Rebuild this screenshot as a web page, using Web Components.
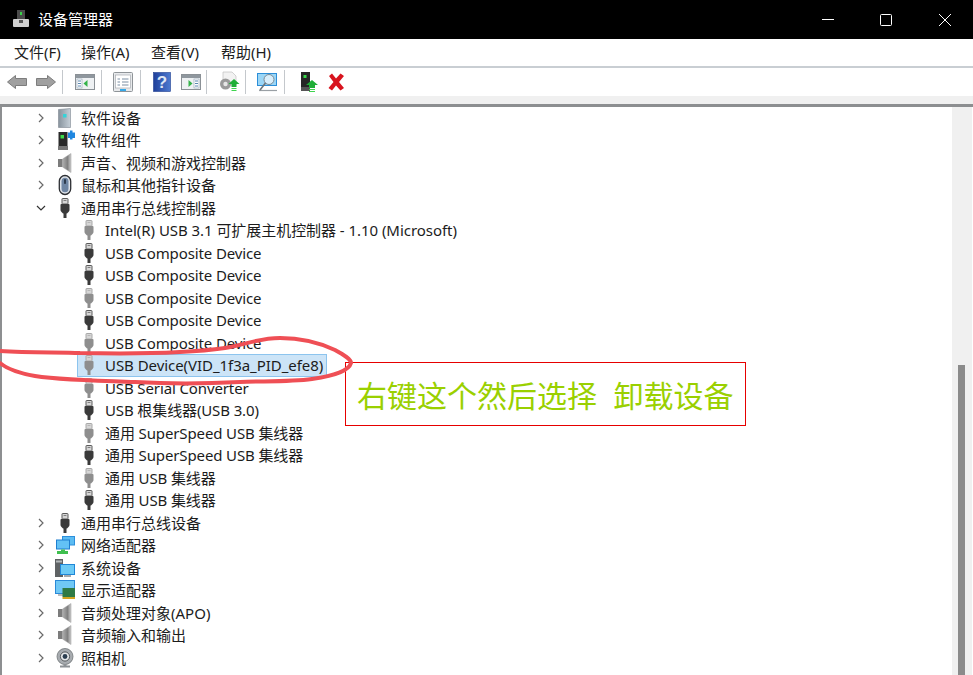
<!DOCTYPE html>
<html lang="zh">
<head>
<meta charset="utf-8">
<title>设备管理器</title>
<style>
    html, body{
        margin: 0;
        padding: 0;
        background: #fff;
        overflow: hidden;
    }
    body{
        font-family: "Noto Sans", "Noto Sans CJK SC", sans-serif;
        font-size: 15px;
        color: #1c1c1c;
    }
</style>
</head>
<body>

<dm-window>
    <dm-titlebar slot="title">设备管理器</dm-titlebar>
    <dm-menubar>
        <dm-menu style="--w:67px">文件(F)</dm-menu>
        <dm-menu style="--w:70px">操作(A)</dm-menu>
        <dm-menu style="--w:70px">查看(V)</dm-menu>
        <dm-menu style="--w:70px">帮助(H)</dm-menu>
    </dm-menubar>
    <dm-toolbar>
        <dm-tool name="back" style="--ml:2px;--w:29px"></dm-tool>
        <dm-tool name="forward" style="--ml:0px;--w:29px"></dm-tool>
        <dm-sep style="--ml:2px"></dm-sep>
        <dm-tool name="panel-left" style="--ml:7px;--w:30px"></dm-tool>
        <dm-sep style="--ml:1px"></dm-sep>
        <dm-tool name="props" style="--ml:6px;--w:30px"></dm-tool>
        <dm-sep style="--ml:2px"></dm-sep>
        <dm-tool name="help" style="--ml:6px;--w:29px"></dm-tool>
        <dm-tool name="panel-right" style="--ml:0px;--w:30px"></dm-tool>
        <dm-sep style="--ml:0px"></dm-sep>
        <dm-tool name="update" style="--ml:7px;--w:30px"></dm-tool>
        <dm-sep style="--ml:1px"></dm-sep>
        <dm-tool name="scan" style="--ml:6px;--w:30px"></dm-tool>
        <dm-sep style="--ml:2px"></dm-sep>
        <dm-tool name="enable" style="--ml:9px;--w:30px"></dm-tool>
        <dm-tool name="remove" style="--ml:-3px;--w:30px"></dm-tool>
    </dm-toolbar>
    <dm-tree>
        <dm-row state="closed" icon="tower">软件设备</dm-row>
        <dm-row state="closed" icon="component">软件组件</dm-row>
        <dm-row state="closed" icon="speaker">声音、视频和游戏控制器</dm-row>
        <dm-row state="closed" icon="mouse">鼠标和其他指针设备</dm-row>
        <dm-row state="open" icon="usb">通用串行总线控制器</dm-row>
        <dm-row child icon="usb-gray" style="--ls:-.05px">Intel(R) USB 3.1 可扩展主机控制器 - 1.10 (Microsoft)</dm-row>
        <dm-row child icon="usb">USB Composite Device</dm-row>
        <dm-row child icon="usb">USB Composite Device</dm-row>
        <dm-row child icon="usb-gray">USB Composite Device</dm-row>
        <dm-row child icon="usb">USB Composite Device</dm-row>
        <dm-row child icon="usb-gray">USB Composite Device</dm-row>
        <dm-row child selected icon="usb-gray" style="--ls:-.05px">USB Device(VID_1f3a_PID_efe8)</dm-row>
        <dm-row child icon="usb-gray">USB Serial Converter</dm-row>
        <dm-row child icon="usb">USB 根集线器(USB 3.0)</dm-row>
        <dm-row child icon="usb-gray">通用 SuperSpeed USB 集线器</dm-row>
        <dm-row child icon="usb">通用 SuperSpeed USB 集线器</dm-row>
        <dm-row child icon="usb-gray">通用 USB 集线器</dm-row>
        <dm-row child icon="usb">通用 USB 集线器</dm-row>
        <dm-row state="closed" icon="usb">通用串行总线设备</dm-row>
        <dm-row state="closed" icon="network">网络适配器</dm-row>
        <dm-row state="closed" icon="system">系统设备</dm-row>
        <dm-row state="closed" icon="display">显示适配器</dm-row>
        <dm-row state="closed" icon="speaker">音频处理对象(APO)</dm-row>
        <dm-row state="closed" icon="speaker">音频输入和输出</dm-row>
        <dm-row state="closed" icon="camera">照相机</dm-row>
    </dm-tree>
    <dm-note>右键这个然后选择  卸载设备</dm-note>
    <dm-scribble></dm-scribble>
</dm-window>

<script>
const ICONS = {
    usb: plug('#3a3a3a', '#5a5a5a'),
    'usb-gray': plug('#8e8e8e', '#a8a8a8'),
    tower: `
        <defs><linearGradient id="t" x1="0" x2="1"><stop offset="0" stop-color="#87939d"/><stop offset="1" stop-color="#c6d0d8"/></linearGradient></defs>
        <path d="M3.500 1.500 L15.500 .5 V19.500 H3.500 Z" fill="url(#t)" stroke="#7d8790" stroke-width=".6"/>
        <rect x="8" y="6" width="3.500" height="3.500" fill="#35d3d8"/>`,
    component: `
        <path d="M3.500 2 H12.500 V16 H3.500 Z" fill="#2a2a2a"/>
        <path d="M3 16 H13 V20 H3 Z" fill="#777"/>
        <rect x="5.500" y="5" width="3.500" height="3.500" fill="#3ddc4a"/>
        <path d="M13 2.500 H15 V.5 H17.500 V2.500 H20 V8 H17.500 V9.500 H15 V8 H13 Z" fill="#1f87e0"/>`,
    speaker: `
        <defs><linearGradient id="s" x1="0" x2="1"><stop offset="0" stop-color="#b0b0b0"/><stop offset=".6" stop-color="#808080"/><stop offset="1" stop-color="#cfcfcf"/></linearGradient></defs>
        <rect x="3" y="6" width="4.500" height="8" fill="#7c7c7c"/>
        <path d="M7.500 6 L16 .5 V19.500 L7.500 14 Z" fill="url(#s)" stroke="#9a9a9a" stroke-width=".5"/>`,
    mouse: `
        <rect x="4.300" y=".5" width="11.400" height="19" rx="5.700" fill="#dfe4ea" stroke="#2d2f33" stroke-width="1.300"/>
        <rect x="6.500" y="2.800" width="7" height="14.500" rx="3.500" fill="#6f86a3"/>
        <rect x="9.200" y="4" width="1.600" height="5" rx=".8" fill="#1f2a38"/>`,
    network: `
        <rect x="7" y="1" width="13" height="9.500" fill="#2c8fdc"/>
        <rect x="8" y="2" width="11" height="7.500" fill="#5cbcf2"/>
        <rect x="1" y="4.500" width="14" height="10" fill="#1f7fd0"/>
        <rect x="2" y="5.500" width="12" height="8" fill="#63c2f5"/>
        <path d="M6 14.500 H10 V16 H13 V19 H2 V16 H6 Z" fill="#3fbf4f"/>`,
    system: `
        <rect x="0" y="1" width="8" height="18" fill="#5f6264"/>
        <rect x="1" y="2.500" width="6" height="2" fill="#b4b8ba"/>
        <rect x="5" y="6" width="15" height="11" fill="#1f87d8"/>
        <rect x="6" y="7" width="13" height="9" fill="#6ccaf6"/>
        <rect x="9" y="17" width="7" height="2" fill="#a5a9ab"/>`,
    display: `
        <rect x="0" y="0" width="20" height="14" fill="#2a8ad8"/>
        <rect x="1" y="1" width="18" height="12" fill="#70c8f5"/>
        <rect x="3" y="14" width="5" height="2" fill="#b9bcbe"/>
        <rect x="7.500" y="8" width="12.500" height="9" fill="#2f7a45"/>
        <rect x="7.500" y="17" width="12.500" height="2" fill="#d4a520"/>`,
    camera: `
        <circle cx="10" cy="8.500" r="8" fill="#a8acb0" stroke="#6f7376" stroke-width=".8"/>
        <circle cx="10" cy="8.500" r="4.600" fill="#e6e8ea" stroke="#55595c"/>
        <circle cx="10" cy="8.500" r="2.400" fill="#2c3e50"/>
        <path d="M8.500 16 H11.500 V17.500 H15 V19.500 H5 V17.500 H8.500 Z" fill="#8c9094"/>`,
    back: `<path d="M.5 10 L8.500 3.500 V6.500 H19.500 V13.500 H8.500 V16.500 Z" fill="#a0a0a0" stroke="#7d7d7d" stroke-width="1"/>`,
    forward: `<path d="M19.500 10 L11.500 3.500 V6.500 H.5 V13.500 H11.500 V16.500 Z" fill="#a0a0a0" stroke="#7d7d7d" stroke-width="1"/>`,
    'panel-left': panel('left'),
    'panel-right': panel('right'),
    props: `
        <rect x=".5" y=".5" width="19" height="19" rx="1" fill="#e8eaec" stroke="#8f9498"/>
        <rect x="2.500" y="3" width="15" height="13" fill="#fff" stroke="#a8adb2" stroke-width=".7"/>
        <path d="M4.500 7 H7 M9 7 H15.500 M4.500 10 H7 M9 10 H15.500 M4.500 13 H7 M9 13 H15.500" stroke="#7b8ea3" stroke-width="1"/>
        <rect x="7" y="17" width="6" height="2" fill="#35a8e8"/>`,
    help: `
        <defs><linearGradient id="h" x1="0" x2="1"><stop offset="0" stop-color="#1f3f9a"/><stop offset="1" stop-color="#4d7ad0"/></linearGradient></defs>
        <rect x="1.500" y=".5" width="17" height="19" fill="url(#h)" stroke="#1f3f8f" stroke-width=".6"/>
        <text x="10" y="16" font-family="Liberation Sans, sans-serif" font-weight="700" font-size="17" text-anchor="middle" fill="#dfe6f4">?</text>`,
    update: `
        <path d="M4 0 H13 L17 4 V13 H4 Z" fill="#f2f2f2" stroke="#c0c0c0" stroke-width=".7"/>
        <circle cx="6.500" cy="12" r="5.500" fill="#9a9a9a"/>
        <circle cx="6.500" cy="12" r="2.200" fill="#e6e6e6"/>
        <path d="M15 7 L20.500 12 H17.500 V15 H12.500 V12 H9.500 Z" fill="#1fae38"/>
        <path d="M12.500 16 H17.500 V17 H12.500 Z M12.500 18 H17.500 V19 H12.500 Z" fill="#3fd44f"/>`,
    scan: `
        <rect x="0" y="1" width="20" height="13" fill="#2c8ed8"/>
        <rect x="1" y="2" width="18" height="11" fill="#9bd6f6"/>
        <path d="M2 18.500 H20" stroke="#9aa0a5" stroke-width="1.200"/>
        <circle cx="12" cy="7.500" r="5" fill="#d8eefb" stroke="#7c8a94"/>
        <path d="M8.500 11 L3 18" stroke="#6d757b" stroke-width="1.600"/>`,
    enable: `
        <rect x="2" y="0" width="9" height="15" fill="#262626"/>
        <rect x="2" y="15" width="9" height="4" fill="#555"/>
        <rect x="4.500" y="3" width="3" height="3" fill="#38d84a"/>
        <path d="M13 8 L19 13 H16 V16 H10 V13 H7 Z" fill="#1fae38"/>
        <path d="M10 17 H16 V18 H10 Z M10 19 H16 V20 H10 Z" fill="#3fd44f"/>`,
    remove: `<path d="M3 4 L6 1.500 L10 6.500 L14.500 1.500 L18 4 L13 10 L18 16 L14.500 18.500 L10 13.500 L6 18.500 L2.500 16 L7.500 10 Z" fill="#d8141e"/>`
};

// usb plug drawn like the device manager one, head on top, cable below
function plug(body, edge){
    return `
        <rect x="7" y=".5" width="6" height="5.500" rx=".6" fill="#d6d6d6" stroke="${edge}" stroke-width="1"/>
        <path d="M8.700 2.500 H9.700 M10.300 2.500 H11.300" stroke="${edge}" stroke-width="1"/>
        <path d="M6.300 6 Q5.500 6 5.500 7 V12 Q5.500 13 6.500 14 L8 15.500 H12 L13.500 14 Q14.500 13 14.500 12 V7 Q14.500 6 13.700 6 Z" fill="${body}"/>
        <rect x="8.500" y="15" width="3" height="5" fill="${body}"/>`;
}

function panel(side){
    const isLeft = side === 'left';
    const listX = isLeft ? 2 : 13;
    const arrow = isLeft ? 'M8.500 11.500 L12.500 8 V15 Z' : 'M7.500 8 L11.500 11.500 L7.500 15 Z';
    return `
        <rect x=".5" y="2.500" width="19" height="15" fill="#eef1f3" stroke="#8b9196"/>
        <rect x="1" y="3" width="18" height="3" fill="#8f979e"/>
        <rect x="${listX}" y="7" width="5" height="9" fill="#fff" stroke="#8fa3b5" stroke-width=".6"/>
        <path d="M${listX + 1} 9 H${listX + 4} M${listX + 1} 11.500 H${listX + 4} M${listX + 1} 14 H${listX + 4}" stroke="#5b87b0" stroke-width="1"/>
        <path d="${arrow}" fill="#35b34a"/>`;
}

class DmIcon extends HTMLElement{
    constructor(){
        super();
        this.attachShadow({mode: 'open'});
    }

    connectedCallback(){
        const name = this.getAttribute('name');
        this.shadowRoot.innerHTML = `
            <style>
                :host{ display: block; width: 20px; height: 20px; }
                svg{ display: block; width: 100%; height: 100%; overflow: visible; }
            </style>
            <svg viewBox="0 0 20 20">${ICONS[name] || ''}</svg>
        `;
    }
}

class DmWindow extends HTMLElement{
    constructor(){
        super();
        this.attachShadow({mode: 'open'});
        this.shadowRoot.innerHTML = `
            <style>
                :host{
                    display: flex;
                    flex-direction: column;
                    position: relative;
                    width: 973px;
                    height: 675px;
                    overflow: hidden;
                    background: #fff;
                }
            </style>
            <slot name="title"></slot>
            <slot></slot>
        `;
    }
}

class DmTitlebar extends HTMLElement{
    constructor(){
        super();
        this.attachShadow({mode: 'open'});
        this.shadowRoot.innerHTML = `
            <style>
                :host{
                    display: flex;
                    align-items: center;
                    height: 39px;
                    flex: none;
                    background: #000;
                    color: #fff;
                    font-size: 15px;
                }
                .logo{ width: 18px; height: 18px; margin-left: 12px; margin-right: 8px; position: relative; top: -1px; }
                .title{ flex: 1; position: relative; top: -1px; }
                .ctls{ display: flex; height: 39px; }
                .ctl{ height: 39px; box-sizing: border-box; padding-top: 13px; display: flex; justify-content: center; }
                .ctl svg{ width: 14px; height: 14px; display: block; }
                .min{ width: 54px; }
                .max{ width: 62px; }
                .close{ width: 56px; }
            </style>
            <svg class="logo" viewBox="0 0 18 18">
                <rect x="5" y="0" width="8" height="11" fill="#4a4a4a"/>
                <rect x="8" y="2" width="2" height="3" fill="#39d24a"/>
                <path d="M2 9 H16 Q17 9 17 10 V16 Q17 17 16 17 H2 Q1 17 1 16 V10 Q1 9 2 9 Z" fill="#d0d0d0"/>
                <rect x="7" y="10" width="4" height="3" fill="#555"/>
            </svg>
            <div class="title"><slot></slot></div>
            <div class="ctls">
                <div class="ctl min"><svg viewBox="0 0 14 14"><path d="M1 6.500 H13" stroke="#fff" stroke-width="1"/></svg></div>
                <div class="ctl max"><svg viewBox="0 0 14 14"><rect x="1.500" y="1.500" width="11" height="11" rx="1" fill="none" stroke="#fff"/></svg></div>
                <div class="ctl close"><svg viewBox="0 0 14 14"><path d="M1 1 L13 13 M13 1 L1 13" stroke="#fff" stroke-width="1"/></svg></div>
            </div>
        `;
    }
}

class DmMenubar extends HTMLElement{
    constructor(){
        super();
        this.attachShadow({mode: 'open'});
        this.shadowRoot.innerHTML = `
            <style>
                :host{
                    display: flex;
                    align-items: center;
                    flex: none;
                    padding: 0 0 1px 14px;
                    background: #fff;
                    box-sizing: border-box;
                    border-bottom: 2px solid #c9ced3;
                    height: 29px;
                }
            </style>
            <slot></slot>
        `;
    }
}

class DmMenu extends HTMLElement{
    constructor(){
        super();
        this.attachShadow({mode: 'open'});
        this.shadowRoot.innerHTML = `
            <style>
                :host{ display: block; flex: none; width: var(--w); font-size: 15px; line-height: 20px; }
            </style>
            <slot></slot>
        `;
    }
}

class DmToolbar extends HTMLElement{
    constructor(){
        super();
        this.attachShadow({mode: 'open'});
        this.shadowRoot.innerHTML = `
            <style>
                :host{
                    display: flex;
                    align-items: center;
                    flex: none;
                    height: 28px;
                    background: #fff;
                    box-shadow: 0 8px 0 #f0f0f0;
                    margin-bottom: 8px;
                }
            </style>
            <slot></slot>
        `;
    }
}

class DmTool extends HTMLElement{
    constructor(){
        super();
        this.attachShadow({mode: 'open'});
        this.shadowRoot.innerHTML = `
            <style>
                :host{
                    display: flex;
                    justify-content: center;
                    flex: none;
                    width: var(--w);
                    margin-left: var(--ml);
                }
            </style>
            <dm-icon name="${this.getAttribute('name')}"></dm-icon>
        `;
    }
}

class DmSep extends HTMLElement{
    constructor(){
        super();
        this.attachShadow({mode: 'open'});
        this.shadowRoot.innerHTML = `
            <style>
                :host{
                    display: block;
                    flex: none;
                    width: 1px;
                    height: 24px;
                    margin-left: var(--ml);
                    background: #c4c8cc;
                }
            </style>
        `;
    }
}

class DmTree extends HTMLElement{
    constructor(){
        super();
        this.attachShadow({mode: 'open'});
        this.shadowRoot.innerHTML = `
            <style>
                :host{
                    display: flex;
                    flex: 1;
                    min-height: 0;
                    border-top: 3px solid #8c8e90;
                    border-left: 2px solid #8d8f91;
                    background: #fff;
                }
                .rows{
                    flex: 1;
                    min-width: 0;
                    margin-top: -.3px;
                    display: grid;
                    grid-auto-rows: 22.500px;
                    align-content: start;
                }
                .scrollbar{
                    flex: none;
                    width: 20px;
                    margin-right: 1px;
                    background: #f0f0f0;
                    display: flex;
                    flex-direction: column;
                    align-items: center;
                }
                .thumb{
                    width: 7px;
                    margin-top: 258px;
                    margin-right: 1px;
                    flex: 1;
                    background: #8b8b8b;
                }
            </style>
            <div class="rows"><slot></slot></div>
            <div class="scrollbar"><div class="thumb"></div></div>
        `;
    }
}

class DmRow extends HTMLElement{
    constructor(){
        super();
        this.attachShadow({mode: 'open'});
    }

    connectedCallback(){
        const state = this.getAttribute('state');
        const icon = this.getAttribute('icon');
        let chevron = '';
        if(state === 'closed'){
            chevron = '<svg viewBox="0 0 10 10"><path d="M3 1 L7 5 L3 9" fill="none" stroke="#6a6a6a" stroke-width="1.200"/></svg>';
        }else if(state === 'open'){
            chevron = '<svg viewBox="0 0 10 10"><path d="M1 3 L5 7 L9 3" fill="none" stroke="#333" stroke-width="1.200"/></svg>';
        }

        this.shadowRoot.innerHTML = `
            <style>
                :host{
                    display: flex;
                    align-items: center;
                    height: 22.500px;
                    padding-left: 30px;
                    white-space: nowrap;
                }
                :host([child]){ padding-left: 45px; }
                .chev{ width: 18px; height: 10px; flex: none; display: flex; justify-content: center; }
                .chev svg{ width: 10px; height: 10px; display: block; }
                .item{
                    display: flex;
                    align-items: center;
                    height: 100%;
                    box-sizing: border-box;
                    margin-left: 3px;
                    padding: 0 4px 0 2px;
                }
                :host([child]) .item{ margin-left: 12px; }
                :host([selected]) .item{
                    background: #cce4f7;
                    box-shadow: inset 0 0 0 1px #8cc4ee;
                }
                .text{ margin-left: 6px; line-height: 20px; }
                :host([child]) .text{ letter-spacing: var(--ls, -.12px); }
            </style>
            <div class="chev">${chevron}</div>
            <div class="item">
                <dm-icon name="${icon}"></dm-icon>
                <div class="text"><slot></slot></div>
            </div>
        `;
    }
}

class DmNote extends HTMLElement{
    constructor(){
        super();
        this.attachShadow({mode: 'open'});
        this.shadowRoot.innerHTML = `
            <style>
                :host{
                    position: absolute;
                    left: 345px;
                    top: 362px;
                    width: 401px;
                    height: 64px;
                    box-sizing: border-box;
                    display: flex;
                    align-items: center;
                    padding-left: 11px;
                    background: #fff;
                    border: 1px solid #e60000;
                    color: #9ad000;
                    font-size: 30px;
                    font-family: "Noto Sans CJK SC", sans-serif;
                }
                .text{ white-space: pre; word-spacing: 1.500px; line-height: 40px; }
            </style>
            <div class="text"><slot></slot></div>
        `;
    }
}

class DmScribble extends HTMLElement{
    constructor(){
        super();
        this.attachShadow({mode: 'open'});
        this.shadowRoot.innerHTML = `
            <style>
                :host{
                    position: absolute;
                    left: 0;
                    top: 330px;
                    width: 360px;
                    height: 70px;
                    pointer-events: none;
                }
                svg{ display: block; width: 100%; height: 100%; }
            </style>
            <svg viewBox="0 0 360 70">
                <path d="M0 21 C30 23 60 22 80 23 C130 24 190 23 225 18 C245 15 258 8 280 8 C300 8 318 12 335 20 C344 25 351 29 351 33 C349 40 338 45 312 49 C290 52 262 51 240 52 C200 54 170 54 135 52 C100 51 60 50 35 46 C18 43 6 38 0 33"
                    fill="none" stroke="#ef4f55" stroke-width="4" stroke-linecap="round" stroke-linejoin="round"/>
            </svg>
        `;
    }
}

customElements.define('dm-icon', DmIcon);
customElements.define('dm-window', DmWindow);
customElements.define('dm-titlebar', DmTitlebar);
customElements.define('dm-menubar', DmMenubar);
customElements.define('dm-menu', DmMenu);
customElements.define('dm-toolbar', DmToolbar);
customElements.define('dm-tool', DmTool);
customElements.define('dm-sep', DmSep);
customElements.define('dm-tree', DmTree);
customElements.define('dm-row', DmRow);
customElements.define('dm-note', DmNote);
customElements.define('dm-scribble', DmScribble);
</script>
</body>
</html>
